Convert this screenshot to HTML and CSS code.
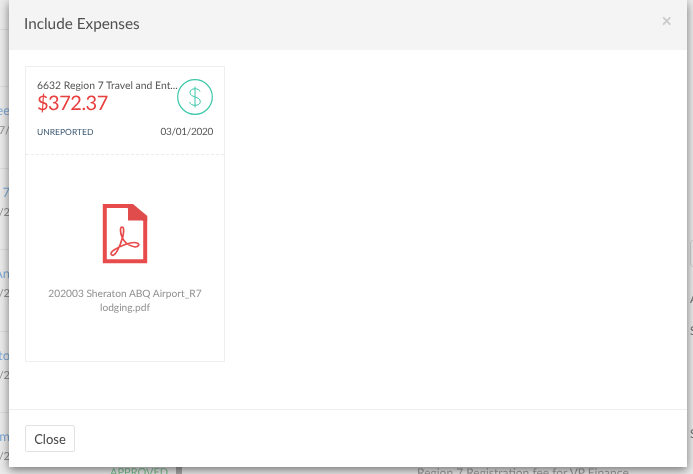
FILE: index.html
```html
<!DOCTYPE html>
<html lang="en">
<head>
    <meta charset="UTF-8">
    <meta name="viewport" content="width=device-width, initial-scale=1.0">
    <title>Include Expenses</title>
    <link rel="stylesheet" href="styles.css">
</head>
<body>
    <!-- page behind the dialog, mostly covered -->
    <div class="backdrop">
        <div class="left_list">
            <div class="row row_head"></div>
            <div class="row row_first"></div>
            <div class="row"><span class="row_link">Fee</span><span class="row_date">07/</span></div>
            <div class="row"><span class="row_link">7</span><span class="row_date">1/2</span></div>
            <div class="row"><span class="row_link">An</span><span class="row_date">1/2</span></div>
            <div class="row"><span class="row_link">to</span><span class="row_date">7/2</span></div>
            <div class="row"><span class="row_link">m</span><span class="row_date">7/2</span></div>
        </div>
        <div class="mid_col">
            <div class="bottom_row">
                <span class="status">APPROVED</span>
                <span class="status_block"></span>
                <span class="bottom_title">Region 7 Registration fee for VP Finance</span>
            </div>
        </div>
        <div class="right_col">
            <div class="right_box"></div>
            <span class="right_a">A</span>
            <span class="right_s">S</span>
            <span class="right_s2">S</span>
        </div>
    </div>

    <div class="modal">
        <div class="modal_head">
            <h4 class="modal_title">Include Expenses</h4>
            <span class="modal_x">&times;</span>
        </div>
        <div class="modal_body">
            <div class="card">
                <div class="card_top">
                    <div class="card_info">
                        <div class="card_text">
                            <div class="card_name">6632 Region 7 Travel and Ent...</div>
                            <div class="card_amount">$372.37</div>
                        </div>
                        <svg class="dollar" viewBox="0 0 36 36" width="36" height="36">
                            <circle cx="18" cy="18" r="17.3" fill="none" stroke="#3cc8a9" stroke-width="1.2"/>
                            <path d="M23 12.6C22.4 10.6 20.5 9.8 18 9.8C15 9.8 13 11.2 13 13.5C13 16 15.2 17 18 17.9C21 18.9 23.3 20 23.3 22.6C23.3 25 21 26.3 18 26.3C15.2 26.3 13.2 25.2 12.6 23M18 7.5V28.5" fill="none" stroke="#3cc8a9" stroke-width="1"/>
                        </svg>
                    </div>
                    <div class="card_meta">
                        <span class="card_status">UNREPORTED</span>
                        <span class="card_date">03/01/2020</span>
                    </div>
                </div>
                <div class="card_file">
                    <svg class="pdf" viewBox="102 203 46 61" width="46" height="61">
                        <path d="M104.8 206H128L145.2 220V261.3H104.8Z" fill="#fff" stroke="#e84b4b" stroke-width="4"/>
                        <path d="M128 204H133L147.3 216V220.5H128Z" fill="#e04c4c"/>
                        <path d="M112 255C115 257 120 247 123 236C124 231 124 227 122 227C120 227 120 232 122 237C124 242 129 246 135 247C139 247 140 244 137 243C132 241 120 246 114 250C111 252 110 254 112 255Z" fill="none" stroke="#e84b4b" stroke-width="1.7"/>
                    </svg>
                    <div class="file_name">202003 Sheraton ABQ Airport_R7 lodging.pdf</div>
                </div>
            </div>
        </div>
        <div class="modal_foot">
            <button class="close_btn">Close</button>
        </div>
    </div>
</body>
</html>
```

FILE: styles.css
```css
body
{
    margin: 0;
    height: 474px;
    overflow: hidden;
    position: relative;
    font-family: 'Lato', 'Liberation Sans', sans-serif;
    text-rendering: geometricPrecision;
    background: #ebebeb;
}

.backdrop
{
    display: flex;
    height: 474px;
    filter: blur(0.4px);
}

.left_list
{
    width: 10px;
    flex: none;
}

.row
{
    height: 81.5px;
    box-sizing: border-box;
    padding-top: 15px;
    border-bottom: 1px solid #dcdcdc;
    display: flex;
    flex-direction: column;
    align-items: flex-end;
    gap: 6px;
    white-space: nowrap;
}

.row_head
{
    height: 30px;
}

.row_first
{
    height: 57px;
}

.row_link
{
    font-size: 13px;
    color: #7fa9d6;
}

.row_date
{
    font-size: 11px;
    color: #8d8d8d;
}

.mid_col
{
    flex: 1;
    display: flex;
    align-items: flex-end;
}

.bottom_row
{
    display: flex;
    align-items: flex-start;
    height: 8px;
    padding-left: 100px;
    overflow: hidden;
    white-space: nowrap;
}

.status
{
    font-size: 11px;
    color: #7cc08f;
    width: 66px;
    line-height: 14px;
}

.status_block
{
    width: 6px;
    height: 8px;
    background: #a8a8a8;
}

.bottom_title
{
    font-size: 12px;
    color: #9a9a9a;
    margin-left: 235px;
    line-height: 14px;
}

.right_col
{
    width: 6px;
    flex: none;
    padding-top: 240px;
    padding-left: 3px;
    box-sizing: border-box;
    display: flex;
    flex-direction: column;
    font-size: 12px;
    color: #6f6f6f;
    white-space: nowrap;
}

.right_box
{
    width: 10px;
    height: 25px;
    border: 1px solid #d0d0d0;
    border-radius: 3px;
    margin-bottom: 24px;
}

.right_s
{
    margin-top: 17px;
}

.right_s2
{
    margin-top: 88px;
}

.modal
{
    position: absolute;
    top: 0;
    left: 9px;
    width: 678px;
    height: 467px;
    display: flex;
    flex-direction: column;
    background: white;
    box-shadow: 0 3px 9px rgba(0, 0, 0, 0.5);
    filter: blur(0.4px);
}

.modal_head
{
    height: 50px;
    flex: none;
    display: flex;
    align-items: center;
    justify-content: space-between;
    padding: 0 15px;
    box-sizing: border-box;
    background: #f4f4f4;
}

.modal_title
{
    margin: 0 0 3px 0;
    font-size: 15.3px;
    font-weight: 400;
    color: #505050;
}

.modal_x
{
    font-size: 18px;
    font-weight: 700;
    line-height: 17px;
    color: #cacaca;
    margin: 0 0 10px 0;
}

.modal_body
{
    flex: 1;
    padding: 16px;
}

.card
{
    width: 200px;
    height: 296px;
    box-sizing: border-box;
    border: 1px solid #eeeeee;
}

.card_top
{
    height: 88px;
    box-sizing: border-box;
    padding: 12px 11px 0 11px;
    border-bottom: 1px dashed #ececec;
}

.card_info
{
    display: flex;
    justify-content: space-between;
}

.card_text
{
    padding-top: 1px;
    width: 120px;
}

.card_name
{
    font-size: 10.4px;
    line-height: 13px;
    color: #555;
    white-space: nowrap;
}

.card_amount
{
    font-size: 20px;
    letter-spacing: -0.5px;
    line-height: 20px;
    color: #e83f3f;
}

.dollar
{
    flex: none;
}

.card_meta
{
    display: flex;
    justify-content: space-between;
    align-items: center;
    margin-top: 11px;
}

.card_status
{
    font-size: 8.5px;
    color: #3c5873;
}

.card_date
{
    font-size: 10px;
    letter-spacing: -0.3px;
    color: #555;
}

.card_file
{
    display: flex;
    flex-direction: column;
    align-items: center;
    padding-top: 48px;
}

.pdf
{
    margin-bottom: 23px;
}

.file_name
{
    width: 170px;
    text-align: center;
    font-size: 10.2px;
    line-height: 14px;
    color: #8f8f8f;
}

.modal_foot
{
    height: 58px;
    flex: none;
    box-sizing: border-box;
    border-top: 1px solid #eeeeee;
    padding: 15px 16px;
}

.close_btn
{
    width: 50px;
    height: 27px;
    padding: 0;
    background: white;
    border: 1px solid #e2e2e2;
    border-radius: 2px;
    font-family: inherit;
    font-size: 13px;
    color: #444;
}
```
